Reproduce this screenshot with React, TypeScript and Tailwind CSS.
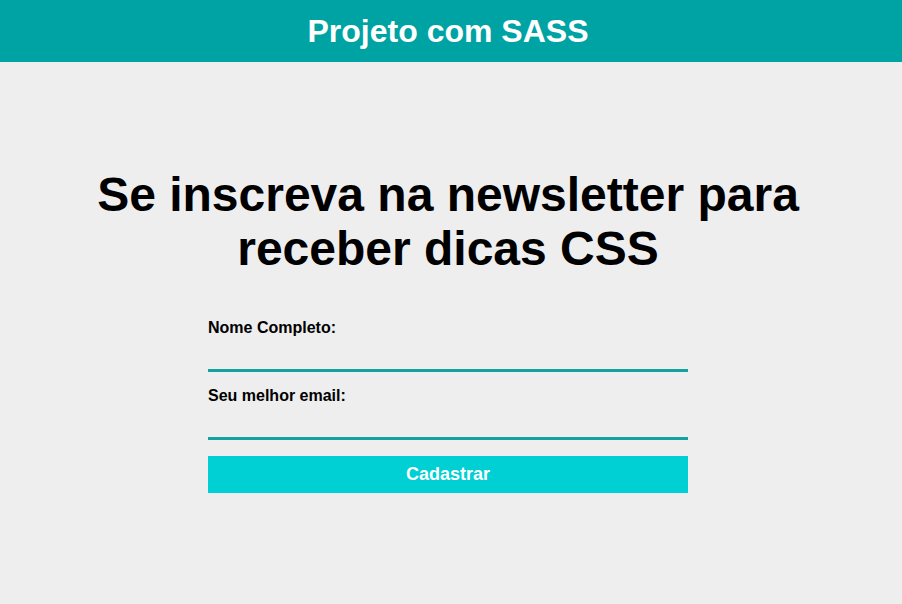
export default function App() {
  return (
    <div className="min-h-[604px] bg-[#eeeeee] font-['Liberation_Sans',Arial,sans-serif]">
      <header className="flex h-[62px] items-center justify-center bg-[#00a3a3] pr-[6px]">
        <h1 className="text-[32px] font-bold text-white">Projeto com SASS</h1>
      </header>
      <main className="pl-4 pr-[22px] pt-[106px]">
        <h2 className="mx-auto max-w-[720px] text-center text-[48px] font-bold leading-[54px] text-black">
          Se inscreva na newsletter para receber dicas CSS
        </h2>
        <form className="mx-auto mt-[43px] w-[480px]" onSubmit={(e) => e.preventDefault()}>
          <label className="block text-[16px] font-bold leading-[18px] text-black">Nome Completo:</label>
          <input
            type="text"
            className="block h-[35px] w-full border-b-[3px] border-[#17a0a0] bg-transparent outline-none"
          />
          <label className="mt-[15px] block text-[16px] font-bold leading-[18px] text-black">Seu melhor email:</label>
          <input
            type="email"
            className="block h-[35px] w-full border-b-[3px] border-[#17a0a0] bg-transparent outline-none"
          />
          <button className="mt-4 block h-[37px] w-full bg-[#00d0d4] text-[18px] font-bold text-white">
            Cadastrar
          </button>
        </form>
      </main>
    </div>
  );
}
